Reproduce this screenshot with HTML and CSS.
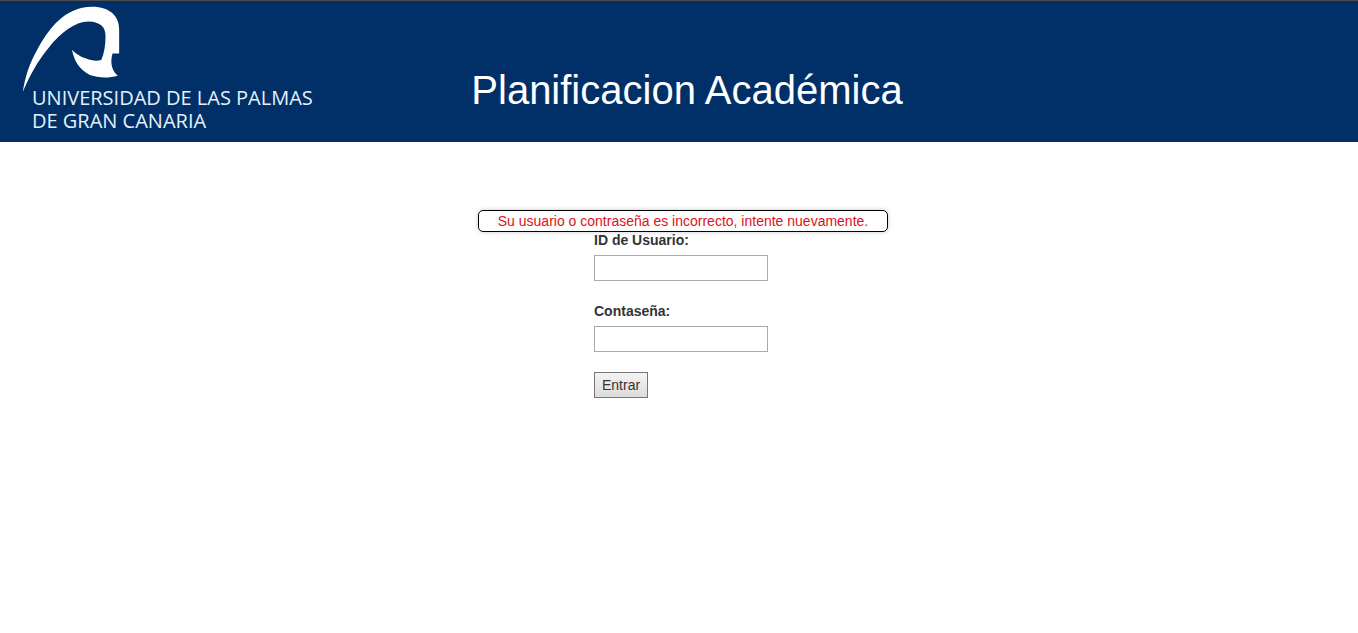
FILE: index.html
```html
<!DOCTYPE html>
<html lang="es">
<head>
<meta charset="utf-8">
<title>Planificacion Académica</title>
<link rel="stylesheet" href="styles.css">
</head>
<body>
<header class="header">
  <div class="brand">
    <svg class="brand-mark" viewBox="60 15 303 265" aria-hidden="true">
      <path d="M68 276C75 230 88 190 112 148C145 88 192 21 277 20C330 20 358 48 358 88V161H338C330 190 336 212 354 228C328 235 298 236 270 226C238 210 222 183 216 150C234 169 254 176 274 181Q290 185 304 181C313 161 317 136 317 108C317 82 302 66 266 65C223 66 183 98 147 142C112 184 88 229 68 276Z"/>
    </svg>
    <div class="brand-name">
      <span class="brand-line">UNIVERSIDAD DE LAS PALMAS</span>
      <span class="brand-line">DE GRAN CANARIA</span>
    </div>
  </div>
  <h1 class="title">Planificacion Académica</h1>
</header>
<main class="main">
  <p class="error" role="alert">Su usuario o contraseña es incorrecto, intente nuevamente.</p>
  <form class="form">
    <div class="field">
      <label class="label" for="user">ID de Usuario:</label>
      <input class="input" id="user" type="text">
    </div>
    <div class="field">
      <label class="label" for="password">Contaseña:</label>
      <input class="input" id="password" type="password">
    </div>
    <button class="submit" type="submit">Entrar</button>
  </form>
</main>
</body>
</html>
```
FILE: styles.css
```css
* {
  box-sizing: border-box;
}

body {
  margin: 0;
  background: #fff;
  color: #333;
  font: 14px/16px "Liberation Sans", Arial, sans-serif;
}

.header {
  display: grid;
  grid-template-columns: 1fr auto 1fr;
  align-items: start;
  padding: 4px 0 10px 16px;
  border-top: 1px solid #4c4c48;
  background: #003067;
  color: #fff;
}

.brand {
  padding-left: 4px;
}

.brand-mark {
  display: block;
  width: 101px;
  height: 88px;
  fill: #fff;
}

.brand-name {
  margin: -7px 0 0 12px;
  color: #e6f0fa;
  font: 500 20px/23px "Open Sans", sans-serif;
  white-space: nowrap;
}

.brand-line {
  display: block;
}

.title {
  margin: 0;
  padding-top: 62px;
  font-size: 40px;
  line-height: 46px;
  font-weight: 400;
}

.main {
  display: flex;
  flex-direction: column;
  align-items: center;
  padding: 68px 0 0 8px;
}

.error {
  margin: 0;
  width: 410px;
  border: 1px solid #000;
  border-radius: 5px;
  box-shadow: 0 0 5px #ccc;
  color: #e01018;
  line-height: 20px;
  text-align: center;
}

.form {
  width: 178px;
}

.field + .field {
  margin-top: 22px;
}

.label {
  display: block;
  margin-bottom: 7px;
  font-weight: 700;
}

.input {
  display: block;
  width: 174px;
  height: 26px;
  padding: 4px;
  border: 1px solid #a9a9a9;
  background: #fff;
  font: inherit;
}

.submit {
  display: block;
  height: 26px;
  margin-top: 20px;
  padding: 0 7px;
  border: 1px solid #767676;
  border-radius: 0;
  background: linear-gradient(#f4f4f4, #dcdcdc);
  color: #333;
  font: inherit;
}
```
